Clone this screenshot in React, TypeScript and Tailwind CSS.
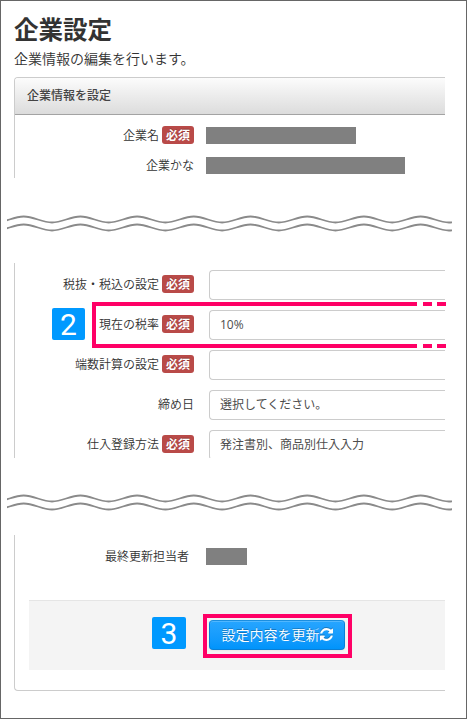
import React from 'react';

function RequiredBadge() {
  return (
    <span className="ml-[3px] flex h-[18px] w-8 shrink-0 items-center justify-center rounded-[3px] bg-[#b94a48] text-xs font-bold leading-none text-white [text-shadow:0_-1px_0_rgba(0,0,0,0.25)]">
      必須
    </span>
  );
}

interface RowLabelProps {
  text: string;
  required?: boolean;
}

function RowLabel({ text, required }: RowLabelProps) {
  return (
    <div className="flex w-[179px] shrink-0 items-center justify-end whitespace-nowrap text-xs leading-[18px] text-[#333]">
      <span>{text}</span>
      {required && <RequiredBadge />}
    </div>
  );
}

interface SelectRowProps extends RowLabelProps {
  value: string;
}

function SelectRow({ text, required, value }: SelectRowProps) {
  return (
    <div className="mb-2.5 flex h-[30px] shrink-0">
      <div className="flex h-7">
        <RowLabel text={text} required={required} />
      </div>
      <div className="ml-[15px] flex flex-1 items-center rounded-l border border-r-0 border-[#ccc] pb-px pl-2.5 font-['Open_Sans','Noto_Sans_CJK_JP',sans-serif] text-xs font-normal text-[#4d4d4d]">
        {value}
      </div>
    </div>
  );
}

const wavePath = (y: number) => {
  let d = `M-40 ${y}`;
  for (let i = 0; i < 10; i++) {
    const x = -40 + i * 56.7;
    d += ` C${x + 10.5} ${y} ${x + 17.8} ${y + 6} ${x + 28.3} ${y + 6}`;
    d += ` S${x + 46.2} ${y} ${x + 56.7} ${y}`;
  }
  return d;
};

function WaveBreak() {
  return (
    <svg className="ml-1.5 block h-[18px] w-[445px]" viewBox="0 0 445 18" fill="none" stroke="#8a8a8a" strokeWidth="1.8">
      <path d={wavePath(2.5)} />
      <path d={wavePath(10.5)} />
    </svg>
  );
}

function StepMarker({ num, className }: { num: number; className: string }) {
  return (
    <div
      className={`absolute flex h-8 items-center justify-center rounded-[2px] bg-[#0099ff] pt-px font-['Roboto','Liberation_Sans',sans-serif] text-[30px] font-normal leading-none text-white ${className}`}
    >
      {num}
    </div>
  );
}

function RefreshIcon() {
  return (
    <svg className="h-[13px] w-[13px] shrink-0 drop-shadow-[0_-1px_0_rgba(0,0,0,0.25)]" viewBox="128 128 1536 1536" fill="currentColor">
      <path d="M1639 1056q0 5-1 7-64 268-268 434.500t-478 166.500q-146 0-282.500-55t-243.500-157l-129 129q-19 19-45 19t-45-19-19-45v-448q0-26 19-45t45-19h448q26 0 45 19t19 45-19 45l-137 137q71 66 161 102t187 36q134 0 250-65t186-179q11-17 53-117 8-23 30-23h192q13 0 22.500 9.500t9.500 22.500zm25-800v448q0 26-19 45t-45 19h-448q-26 0-45-19t-19-45 19-45l138-138q-148-137-349-137-134 0-250 65t-186 179q-11 17-53 117-8 23-30 23h-199q-13 0-22.500-9.500t-9.500-22.500v-7q65-268 270-434.500t480-166.500q146 0 284 55.500t245 156.500l130-129q19-19 45-19t45 19 19 45z" />
    </svg>
  );
}

// Highlight around the tax rate row, left open on the right with dashes
function RateHighlight() {
  return (
    <div className="absolute left-[91px] top-[301px] flex h-[46px] w-[354px]">
      <div className="w-[325px] border-y-4 border-l-4 border-[#ff0066]" />
      <div className="ml-1.5 w-[9px] border-y-4 border-[#ff0066]" />
      <div className="ml-[5px] w-[9px] border-y-4 border-[#ff0066]" />
    </div>
  );
}

export default function App() {
  return (
    <div className="relative flex h-[719px] w-[467px] flex-col overflow-hidden border border-[#666] bg-white font-['Noto_Sans_CJK_JP',sans-serif] font-[350]">
      <h1 className="ml-[13px] mt-3 h-8 text-[24.5px] font-bold leading-[31px] text-[#333]">企業設定</h1>
      <p className="ml-[13px] mt-[3px] h-5 text-sm leading-5 text-[#333]">企業情報の編集を行います。</p>

      <section className="ml-[13px] mt-[9px] h-[101px] w-[431px] shrink-0 rounded-tl border-l border-t border-[#ccc]">
        <div className="flex h-[37px] items-center rounded-tl-[3px] border-b border-[#a3a3a3] bg-gradient-to-b from-[#fcfcfc] to-[#dcdcdc] pb-0.5 pl-3 text-xs font-medium text-[#444]">
          企業情報を設定
        </div>
        <div className="mt-[11px] flex h-[18px]">
          <RowLabel text="企業名" required />
          <div className="ml-3 mt-px h-[17px] w-[150px] bg-[#808080]" />
        </div>
        <div className="mt-3 flex h-[18px]">
          <RowLabel text="企業かな" />
          <div className="ml-3 mt-px h-[17px] w-[199px] bg-[#808080]" />
        </div>
      </section>

      <div className="mt-9 h-[49px] shrink-0">
        <WaveBreak />
      </div>

      <section className="ml-[13px] flex h-[195px] w-[431px] shrink-0 flex-col overflow-hidden border-l border-[#ccc] pt-[7px]">
        <SelectRow text="税抜・税込の設定" required value="" />
        <SelectRow text="現在の税率" required value="10%" />
        <SelectRow text="端数計算の設定" required value="" />
        <SelectRow text="締め日" value="選択してください。" />
        <SelectRow text="仕入登録方法" required value="発注書別、商品別仕入入力" />
      </section>

      <div className="mt-[35px] h-[42px] shrink-0">
        <WaveBreak />
      </div>

      <section className="ml-[13px] h-[156px] w-[431px] shrink-0 rounded-bl-[4px] border-b border-l border-[#ccc] pt-3">
        <div className="flex h-[18px]">
          <div className="flex w-[174px] justify-end text-xs leading-[17px] text-[#333]">最終更新担当者</div>
          <div className="ml-[17px] mt-px h-[17px] w-[41px] bg-[#808080]" />
        </div>
        <div className="ml-3.5 mt-[35px] flex h-[70px] items-start border-t border-[#e5e5e5] bg-[#f4f4f4] pl-[174px] pt-[13px]">
          <div className="flex h-[44px] w-[149px] border-4 border-[#ff0066] pl-0.5 pt-0.5">
            <button
              type="button"
              className="flex h-[30px] w-[136px] items-center justify-center rounded-[4px] border border-[#0a7fd6] border-t-[#1a8ee0] bg-gradient-to-b from-[#26a5ff] to-[#0094fb] pb-0.5 text-sm leading-none text-white shadow-[inset_0_1px_0_rgba(255,255,255,0.2),0_1px_2px_rgba(0,0,0,0.05)] [text-shadow:0_-1px_0_rgba(0,0,0,0.25)]"
            >
              設定内容を更新
              <RefreshIcon />
            </button>
          </div>
        </div>
      </section>

      <RateHighlight />
      <StepMarker num={2} className="left-[51px] top-[307px] w-[33px]" />
      <StepMarker num={3} className="left-[151px] top-[616px] w-[34px]" />
    </div>
  );
}
